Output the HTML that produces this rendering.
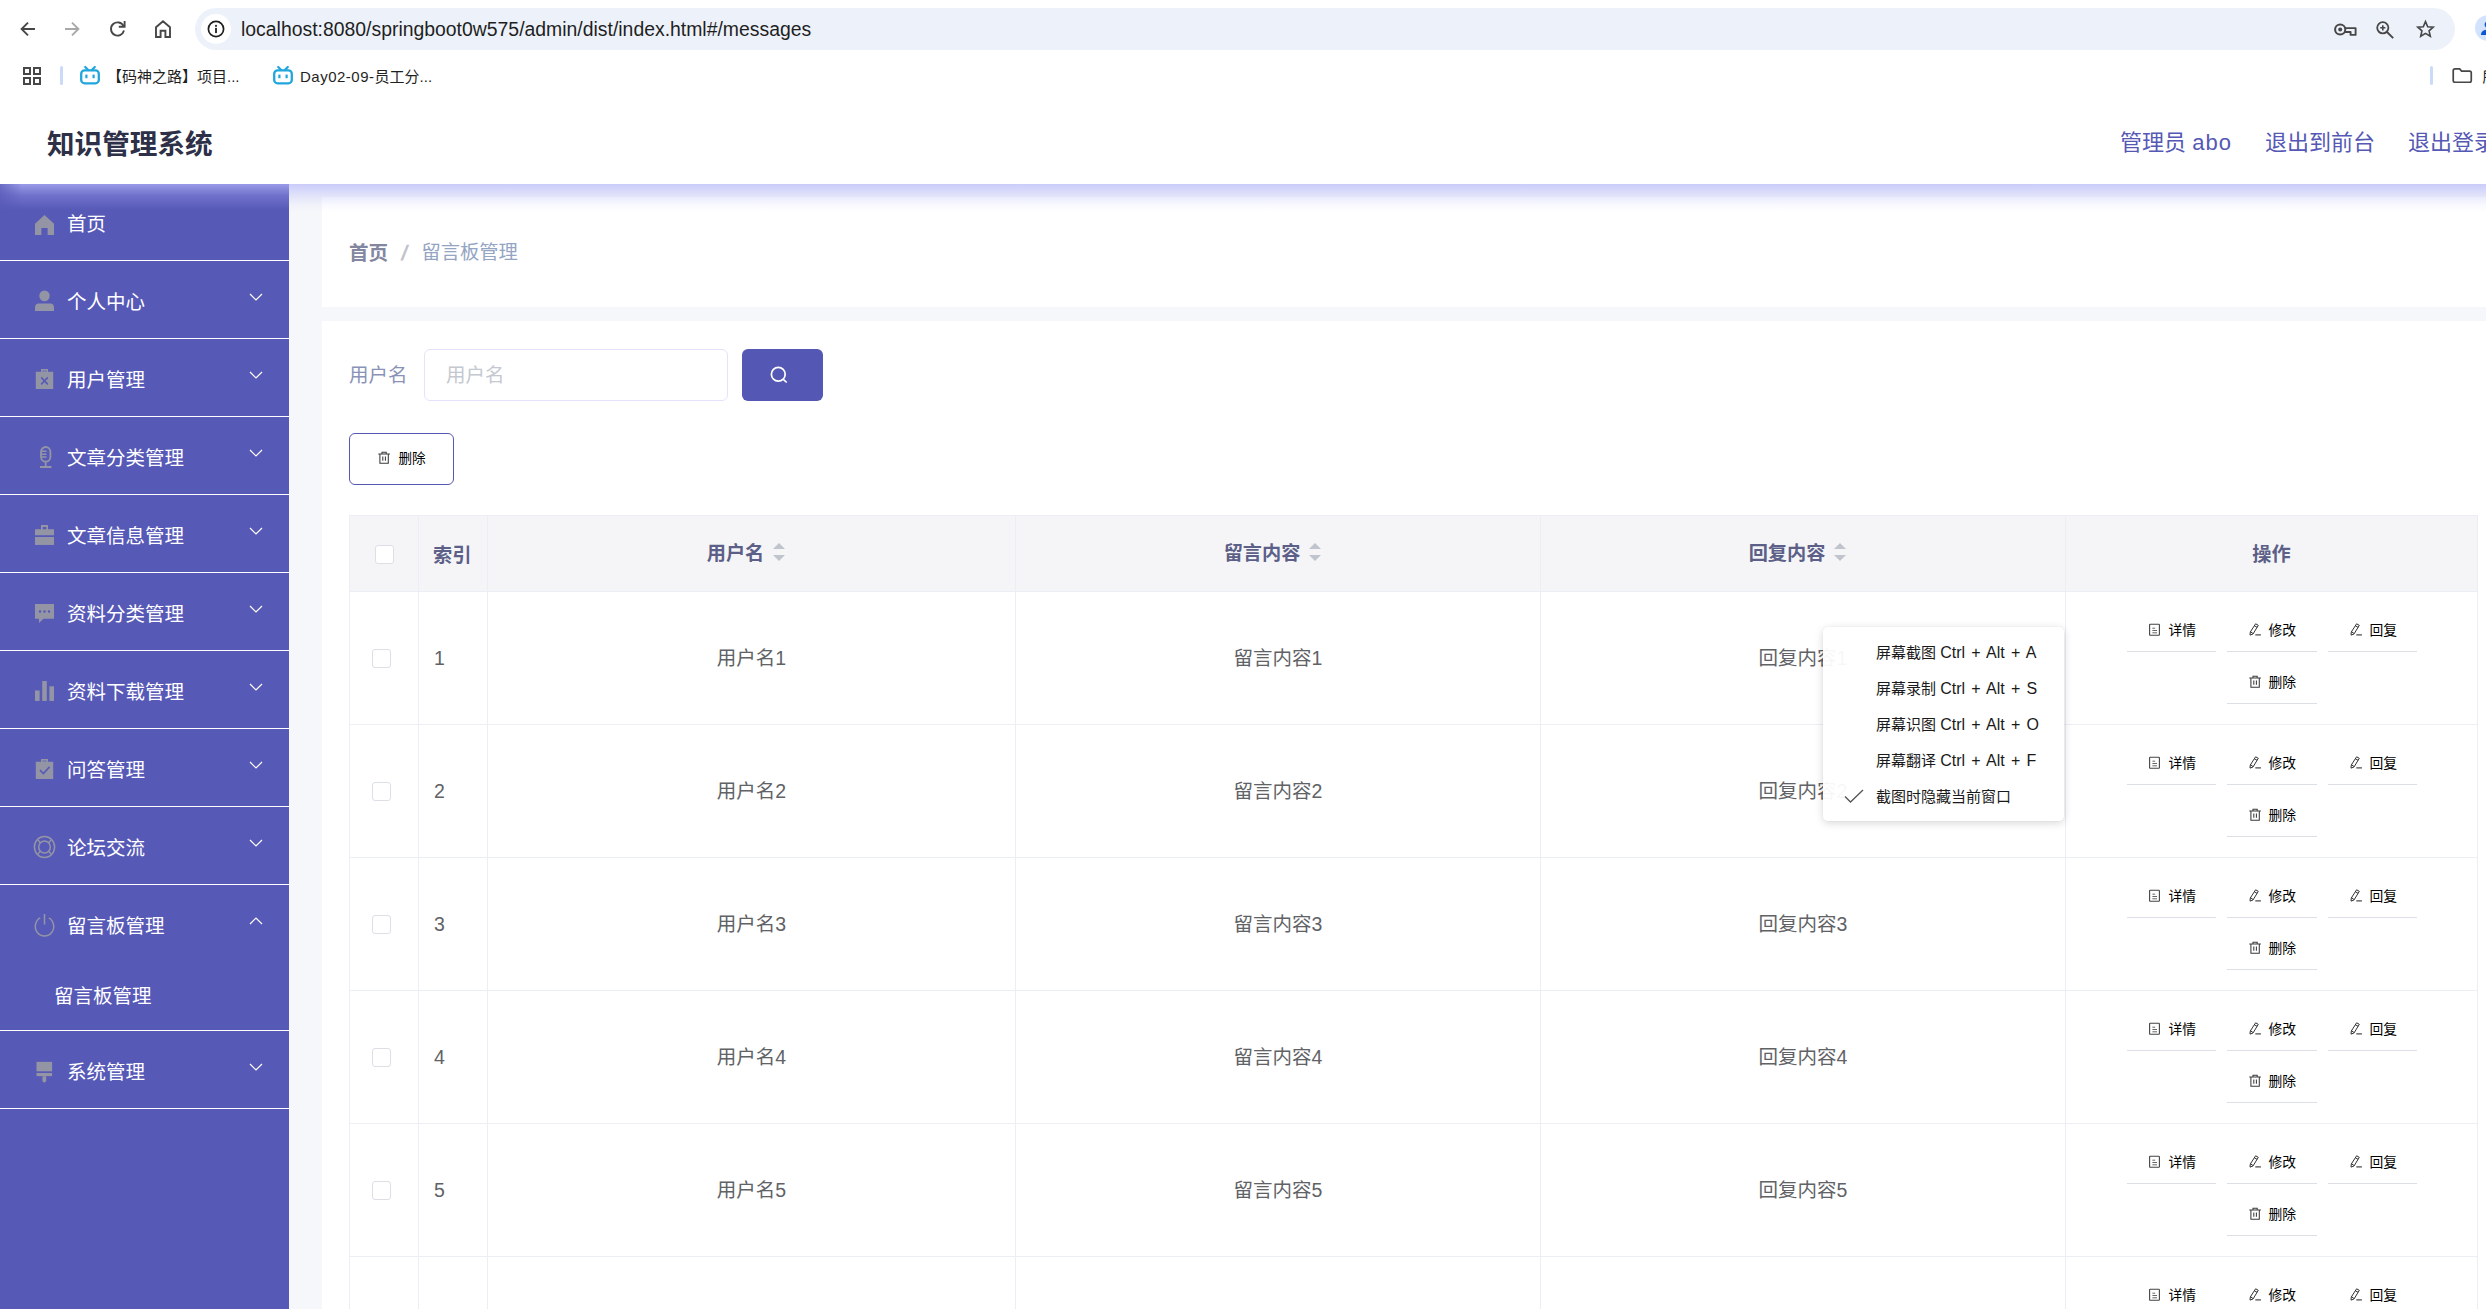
<!DOCTYPE html>
<html lang="zh-CN"><head><meta charset="utf-8"><title>知识管理系统</title>
<style>
*{box-sizing:border-box;margin:0;padding:0}
html,body{width:2486px;height:1309px;overflow:hidden;background:#fff}
body{position:relative;font-family:"Liberation Sans","Noto Sans CJK SC",sans-serif;color:#333}
.abs{position:absolute}
svg{display:block;overflow:visible}
/* ---------- browser chrome ---------- */
#chrome{position:absolute;left:0;top:0;width:2486px;height:100px;background:#fff}
#pill{position:absolute;left:195px;top:8px;width:2260px;height:42px;border-radius:21px;background:#edf2fa}
#infoc{position:absolute;left:6px;top:6px;width:30px;height:30px;border-radius:50%;background:#fff}
#url{position:absolute;left:46px;top:0;height:42px;line-height:42px;font-size:19.4px;color:#1f1f1f;white-space:nowrap;letter-spacing:0px}
.bm{position:absolute;top:65px;height:24px;line-height:24px;font-size:15px;color:#1f1f1f;white-space:nowrap}
/* ---------- app header ---------- */
#hdr{position:absolute;left:0;top:100px;width:2486px;height:84px;background:#fff;z-index:5}
#title{position:absolute;left:47px;top:0;height:84px;line-height:90px;font-size:27.6px;font-weight:700;color:#2d3047;white-space:nowrap}
.nav{position:absolute;top:0;height:84px;line-height:86px;font-size:22px;color:#5558b5;white-space:nowrap}
#glowS{position:absolute;left:0;top:184px;width:289px;height:26px;z-index:6;background:linear-gradient(to bottom,rgba(165,166,240,.85),rgba(140,141,225,.45) 45%,rgba(87,88,183,0) 100%)}
#glowC{position:absolute;left:0;top:184px;width:22px;height:26px;z-index:7;background:linear-gradient(to right,rgba(87,89,183,.7),rgba(87,89,183,0))}
#glowM{position:absolute;left:289px;top:184px;width:2197px;height:28px;z-index:6;background:linear-gradient(to bottom,rgba(190,192,250,.78),rgba(190,192,250,.43) 35%,rgba(190,192,250,.25) 54%,rgba(190,192,250,.07) 79%,rgba(190,192,250,0) 100%)}
/* ---------- sidebar ---------- */
#side{position:absolute;left:0;top:184px;width:289px;height:1125px;background:#5759b7}
.mi{position:relative;height:78px;border-bottom:1px solid #fff;color:#fff;font-size:19.5px}
.mi .tx{position:absolute;left:67px;top:0;height:77px;line-height:82px;white-space:nowrap}
.mi .ic{position:absolute;left:34px;top:28.5px;width:21px;height:22px}
.mi .ar{position:absolute;left:249px;top:31.500px;width:14px;height:8px}
.mi.first{height:77px}.mi.first .ic{top:29.5px}.mi.first .tx{top:-1px}
.sub{height:146px}
.sub .tx2{position:absolute;left:54px;top:76.500px;height:68px;line-height:68px;white-space:nowrap}
/* ---------- main ---------- */
#main{position:absolute;left:289px;top:184px;width:2197px;height:1125px;background:#f6f7fa}
#bc{position:absolute;left:33px;top:13px;width:2200px;height:110px;background:#fff}
#bc span{position:absolute;top:0;height:110px;line-height:112px;font-size:19.5px;white-space:nowrap}
#card{position:absolute;left:33px;top:137px;width:2200px;height:1000px;background:#fff}
#lbl{position:absolute;left:27px;top:28px;height:52px;line-height:53px;font-size:19.5px;color:#8a93b7;white-space:nowrap}
#inp{position:absolute;left:102px;top:28px;width:304px;height:52px;border:1px solid #e4e3fb;border-radius:6px;background:#fff}
#inp span{position:absolute;left:21px;top:0;height:50px;line-height:51px;font-size:19.5px;color:#c4c8d0;white-space:nowrap}
#sbtn{position:absolute;left:420px;top:28px;width:81px;height:52px;border-radius:6px;background:#5457b3}
#dbtn{position:absolute;left:27px;top:112px;width:105px;height:52px;border:1px solid #5457b3;border-radius:6px;background:#fff}
#dbtn span{position:absolute;left:48.5px;top:0;height:50px;line-height:50px;font-size:13.6px;color:#000;white-space:nowrap}
/* table */
#tbl{position:absolute;left:27px;top:194px;width:2129px;height:900px;border-left:1px solid #ebeef5;border-top:1px solid #ebeef5;border-right:1px solid #ebeef5}
.tr{position:relative;width:100%;height:133px;border-bottom:1px solid #ebeef5}
.th{height:76px;background:#f5f5f8}
.td{position:absolute;top:0;height:100%;border-right:1px solid #ebeef5}
.c0{left:0;width:69px}.c1{left:69px;width:69px}.c2{left:138px;width:528px}.c3{left:666px;width:525px}.c4{left:1191px;width:525px}.c5{left:1716px;width:411px;border-right:0}
.cb{position:absolute;width:19px;height:19px;border:1px solid #dcdfe6;border-radius:3px;background:#fff}
.ht{position:absolute;top:0;height:75px;line-height:78px;font-size:19.2px;font-weight:700;color:#5c5f87;white-space:nowrap}
.ct{position:absolute;top:0;height:132px;line-height:133px;font-size:19.5px;color:#606266;white-space:nowrap}
.cen{left:0;width:100%;text-align:center}
.srt{left:-4.5px;line-height:75.5px}
.sort{display:inline-block;position:relative;width:14px;height:20px;vertical-align:middle;margin-left:9px;top:-3px}
.sort i{position:absolute;left:0;width:0;height:0;border-left:6.5px solid transparent;border-right:6.5px solid transparent}
.sort .u{top:1px;border-bottom:6.5px solid #c0c4cc}
.sort .d{top:13.5px;border-top:6.5px solid #c0c4cc}
.ob{position:absolute;width:89px;height:43px;border-bottom:1px solid #dcdfe6;font-size:13.8px;color:#000;white-space:nowrap}
.ob svg{position:absolute;left:22px;top:14.200px}
.ob span{position:absolute;left:41.5px;top:0;height:44px;line-height:44px}
/* popup */
#pop{position:absolute;left:1823px;top:627px;width:241px;height:194px;border-radius:5px;background:rgba(255,255,255,.95);box-shadow:0 2px 8px rgba(0,0,0,.16),0 0 1px rgba(0,0,0,.12);z-index:20}
#pop div{position:absolute;left:53px;height:36px;line-height:36px;font-size:15px;color:#1a1a1a;white-space:nowrap}
#pop .lt{font-size:16px;word-spacing:1.8px}
</style></head>
<body>
<div id="chrome">
<svg width="16" height="16" viewBox="0 0 16 16" style="position:absolute;left:20px;top:21px"><path d="M15 8H2.2M8 1.6L1.6 8 8 14.4" fill="none" stroke="#474747" stroke-width="1.9"/></svg>
<svg width="16" height="16" viewBox="0 0 16 16" style="position:absolute;left:64px;top:21px"><path d="M1 8H13.8M8 1.6L14.4 8 8 14.4" fill="none" stroke="#a8a8a8" stroke-width="1.9"/></svg>
<svg width="17" height="17" viewBox="0 0 17 17" style="position:absolute;left:109px;top:20px"><path d="M14.6 6.2A6.6 6.6 0 1 0 15 10.6" fill="none" stroke="#474747" stroke-width="1.9"/><path d="M15.6 1v5.8H9.8" fill="none" stroke="#474747" stroke-width="1.9"/></svg>
<svg width="16" height="18" viewBox="0 0 16 18" style="position:absolute;left:155px;top:19.5px"><path d="M1 17V7.2L8 1.3l7 5.9V17h-4.6v-6.2H5.6V17z" fill="none" stroke="#474747" stroke-width="1.9" stroke-linejoin="miter"/></svg>
<div id="pill"><div id="infoc"><svg width="18" height="18" viewBox="0 0 18 18" style="position:absolute;left:6px;top:6px"><circle cx="9" cy="9" r="7.6" fill="none" stroke="#1f1f1f" stroke-width="1.7"/><rect x="8.1" y="7.9" width="1.8" height="5.2" fill="#1f1f1f"/><rect x="8.1" y="4.9" width="1.8" height="1.9" fill="#1f1f1f"/></svg></div>
<div id="url">localhost:8080/springboot0w575/admin/dist/index.html#/messages</div>
<svg width="23" height="12" viewBox="0 0 23 12" style="position:absolute;left:2138.5px;top:15.3px"><circle cx="6.2" cy="6.500" r="5.100" fill="none" stroke="#474747" stroke-width="2"/><circle cx="6.2" cy="6.4" r="2" fill="#474747"/><path d="M10.9 5.100H21.600V11.900H16.600V9H10.900" fill="none" stroke="#474747" stroke-width="1.9" stroke-linejoin="round"/></svg>
<svg width="18" height="18" viewBox="0 0 18 18" style="position:absolute;left:2181px;top:13px"><circle cx="6.8" cy="6.8" r="5.6" fill="none" stroke="#474747" stroke-width="1.8"/><path d="M11 11l6.2 6.2" stroke="#474747" stroke-width="1.9" fill="none"/><path d="M4.2 6.8h5.2M6.8 4.2v5.2" stroke="#474747" stroke-width="1.6" fill="none"/></svg>
<svg width="19" height="17.3" viewBox="0 0 19 18" style="position:absolute;left:2220.500px;top:11.800px"><path d="M9.5 1.7l2.3 5.3 5.7.5-4.3 3.8 1.3 5.6-5-3-5 3 1.3-5.6L1.5 7.5l5.7-.5z" fill="none" stroke="#474747" stroke-width="1.7" stroke-linejoin="miter"/></svg>
</div>
<div class="abs" style="left:2475px;top:15px;width:26px;height:26px;border-radius:50%;background:#d3e3fd"></div>
<svg width="16" height="16" viewBox="0 0 16 16" style="position:absolute;left:2479.500px;top:19.500px"><circle cx="8" cy="4.6" r="3.4" fill="#0b57d0"/><path d="M1 15c0-4 3.5-5.4 7-5.4s7 1.4 7 5.4z" fill="#0b57d0"/></svg>
<svg width="18" height="18" viewBox="0 0 18 18" style="position:absolute;left:23px;top:67px"><g fill="none" stroke="#474747" stroke-width="2"><rect x="1" y="1" width="6" height="6"/><rect x="11" y="1" width="6" height="6"/><rect x="1" y="11" width="6" height="6"/><rect x="11" y="11" width="6" height="6"/></g></svg>
<div class="abs" style="left:60px;top:66px;width:3px;height:19px;border-radius:1.5px;background:#c9dbf8"></div>
<svg width="20" height="19" viewBox="0 0 20 19" style="position:absolute;left:80px;top:66px"><path d="M5.2 1l3 3M14.8 1l-3 3" stroke="#20a6dd" stroke-width="2.2" fill="none" stroke-linecap="round"/><rect x="1.2" y="4.3" width="17.6" height="13" rx="3.4" fill="none" stroke="#20a6dd" stroke-width="2.3"/><rect x="5.3" y="8.6" width="2.2" height="3.6" fill="#20a6dd"/><rect x="12.5" y="8.6" width="2.2" height="3.6" fill="#20a6dd"/></svg>
<div class="bm" style="left:107px">【码神之路】项目...</div>
<svg width="20" height="19" viewBox="0 0 20 19" style="position:absolute;left:273px;top:66px"><path d="M5.2 1l3 3M14.8 1l-3 3" stroke="#20a6dd" stroke-width="2.2" fill="none" stroke-linecap="round"/><rect x="1.2" y="4.3" width="17.6" height="13" rx="3.4" fill="none" stroke="#20a6dd" stroke-width="2.3"/><rect x="5.3" y="8.6" width="2.2" height="3.6" fill="#20a6dd"/><rect x="12.5" y="8.6" width="2.2" height="3.6" fill="#20a6dd"/></svg>
<div class="bm" style="left:300px"><span style="letter-spacing:.5px">Day02-09-</span>员工分...</div>
<div class="abs" style="left:2430px;top:66px;width:3px;height:19px;border-radius:1.5px;background:#c9dbf8"></div>
<svg width="20.5" height="15.2" viewBox="0 0 21 16" style="position:absolute;left:2452px;top:68px"><path d="M1 2.8c0-1 .8-1.8 1.8-1.8h5l2 2.2h8.4c1 0 1.8.8 1.8 1.8v8.2c0 1-.8 1.8-1.8 1.8H2.800c-1 0-1.8-.8-1.8-1.8z" fill="none" stroke="#474747" stroke-width="1.8"/></svg>
<div class="bm" style="left:2482.500px">所有书签</div>
<div id="hdr"><div id="title">知识管理系统</div>
<div class="nav" style="left:2120px">管理员 <span style="letter-spacing:1.1px">abo</span></div>
<div class="nav" style="left:2265px">退出到前台</div>
<div class="nav" style="left:2408px">退出登录</div></div>
<div id="glowS"></div><div id="glowC"></div><div id="glowM"></div>
<div id="side">
<div class="mi first"><div class="ic"><svg width="21" height="22" viewBox="0 0 21 21" preserveAspectRatio="none"><path d="M10.5 1L1 9.3V20h6.4v-6.6h6.200V20H20V9.300z" fill="#9395a5"/></svg></div><div class="tx">首页</div></div>
<div class="mi"><div class="ic"><svg width="21" height="22" viewBox="0 0 21 21" preserveAspectRatio="none"><circle cx="10.5" cy="5.600" r="5.2" fill="#9395a5"/><path d="M1 20v-3.600c0-2.200 1.600-3.600 3.600-3.600h11.800c2 0 3.600 1.400 3.600 3.600V20z" fill="#9395a5"/></svg></div><div class="tx">个人中心</div><div class="ar"><svg width="14" height="8" viewBox="0 0 14 8" style=""><path d="M1 1l6 6 6-6" fill="none" stroke="#fff" stroke-width="1.200"/></svg></div></div>
<div class="mi"><div class="ic"><svg width="21" height="22" viewBox="0 0 21 21" preserveAspectRatio="none"><path d="M7 1h7v2.600h5.200V20H1.800V3.600H7z" fill="#9395a5"/><path d="M7.200 9l6.600 6.600M13.800 9l-6.600 6.600" stroke="#5759b7" stroke-width="1.500" fill="none"/><rect x="8.300" y="2.200" width="4.400" height="1.400" fill="#5759b7" opacity=".45"/></svg></div><div class="tx">用户管理</div><div class="ar"><svg width="14" height="8" viewBox="0 0 14 8" style=""><path d="M1 1l6 6 6-6" fill="none" stroke="#fff" stroke-width="1.200"/></svg></div></div>
<div class="mi"><div class="ic"><svg width="21" height="22" viewBox="0 0 21 21" preserveAspectRatio="none"><rect x="7" y="1" width="9.400" height="14" rx="4.700" fill="none" stroke="#9395a5" stroke-width="1.800"/><path d="M7.500 5h5M7.500 7.800h5M7.500 10.600h5" stroke="#9395a5" stroke-width="1.400" fill="none"/><path d="M11.700 15.500v4M6 20h11.400" stroke="#9395a5" stroke-width="1.800" fill="none"/></svg></div><div class="tx">文章分类管理</div><div class="ar"><svg width="14" height="8" viewBox="0 0 14 8" style=""><path d="M1 1l6 6 6-6" fill="none" stroke="#fff" stroke-width="1.200"/></svg></div></div>
<div class="mi"><div class="ic"><svg width="21" height="22" viewBox="0 0 21 21" preserveAspectRatio="none"><path d="M7 1h7v4h6v5.800H1V5h6zM8.800 2.800V5h3.400V2.800z" fill="#9395a5" fill-rule="evenodd"/><rect x="1" y="12.400" width="19" height="7.600" fill="#9395a5"/></svg></div><div class="tx">文章信息管理</div><div class="ar"><svg width="14" height="8" viewBox="0 0 14 8" style=""><path d="M1 1l6 6 6-6" fill="none" stroke="#fff" stroke-width="1.200"/></svg></div></div>
<div class="mi"><div class="ic"><svg width="21" height="22" viewBox="0 0 21 21" preserveAspectRatio="none"><path d="M1 2h19v14H9.500L5 20v-4H1z" fill="#9395a5"/><circle cx="6" cy="9" r="1.200" fill="#5759b7"/><circle cx="10.500" cy="9" r="1.200" fill="#5759b7"/><circle cx="15" cy="9" r="1.200" fill="#5759b7"/></svg></div><div class="tx">资料分类管理</div><div class="ar"><svg width="14" height="8" viewBox="0 0 14 8" style=""><path d="M1 1l6 6 6-6" fill="none" stroke="#fff" stroke-width="1.200"/></svg></div></div>
<div class="mi"><div class="ic"><svg width="21" height="22" viewBox="0 0 21 21" preserveAspectRatio="none"><rect x="1" y="10" width="4.600" height="10" fill="#9395a5"/><rect x="8.200" y="1" width="4.600" height="19" fill="#9395a5"/><rect x="15.400" y="6" width="4.600" height="14" fill="#9395a5"/></svg></div><div class="tx">资料下载管理</div><div class="ar"><svg width="14" height="8" viewBox="0 0 14 8" style=""><path d="M1 1l6 6 6-6" fill="none" stroke="#fff" stroke-width="1.200"/></svg></div></div>
<div class="mi"><div class="ic"><svg width="21" height="22" viewBox="0 0 21 21" preserveAspectRatio="none"><path d="M7 1h7v2.600h5.200V20H1.800V3.600H7z" fill="#9395a5"/><path d="M6 11.500l3.400 3.400L15.500 8.500" stroke="#5759b7" stroke-width="1.600" fill="none"/><rect x="8.300" y="2.200" width="4.400" height="1.400" fill="#5759b7" opacity=".45"/></svg></div><div class="tx">问答管理</div><div class="ar"><svg width="14" height="8" viewBox="0 0 14 8" style=""><path d="M1 1l6 6 6-6" fill="none" stroke="#fff" stroke-width="1.200"/></svg></div></div>
<div class="mi"><div class="ic"><svg width="21" height="22" viewBox="0 0 21 21" preserveAspectRatio="none"><circle cx="10.500" cy="10.500" r="10.100" fill="none" stroke="#9395a5" stroke-width="1.500"/><circle cx="10.500" cy="10.500" r="5.800" fill="none" stroke="#9395a5" stroke-width="1.500"/><path d="M3.800 3.800l2.800 2.800M17.200 3.800l-2.800 2.800M3.800 17.200l2.800-2.800M17.200 17.200l-2.800-2.800" stroke="#9395a5" stroke-width="1.400" fill="none"/></svg></div><div class="tx">论坛交流</div><div class="ar"><svg width="14" height="8" viewBox="0 0 14 8" style=""><path d="M1 1l6 6 6-6" fill="none" stroke="#fff" stroke-width="1.200"/></svg></div></div>
<div class="mi sub"><div class="ic"><svg width="21" height="22" viewBox="0 0 21 21" preserveAspectRatio="none"><path d="M6.200 3.700A9.200 9.200 0 1 0 14.800 3.700" fill="none" stroke="#9395a5" stroke-width="1.500"/><path d="M10.500 0v10" stroke="#9395a5" stroke-width="1.500" fill="none"/></svg></div><div class="tx">留言板管理</div><div class="ar"><svg width="14" height="8" viewBox="0 0 14 8" style=""><path d="M1 7L7 1l6 6" fill="none" stroke="#fff" stroke-width="1.200"/></svg></div><div class="tx2">留言板管理</div></div>
<div class="mi"><div class="ic"><svg width="21" height="22" viewBox="0 0 21 21" preserveAspectRatio="none"><rect x="2.500" y="1.800" width="15.600" height="9" fill="#9395a5"/><rect x="2.500" y="12.400" width="15.600" height="3" fill="#9395a5"/><path d="M8.400 15.400h3.800v5l-1.900 1.300-1.900-1.300z" fill="#9395a5"/></svg></div><div class="tx">系统管理</div><div class="ar"><svg width="14" height="8" viewBox="0 0 14 8" style=""><path d="M1 1l6 6 6-6" fill="none" stroke="#fff" stroke-width="1.200"/></svg></div></div>
</div>
<div id="main">
<div id="bc"><span style="left:27px;font-weight:700;color:#82869f">首页</span><span style="left:80px;color:#c0c4cc;font-weight:700;transform:skewX(-12deg);font-size:21px">/</span><span style="left:99.5px;color:#94a4c3;font-size:19.3px">留言板管理</span></div>
<div id="card">
<div id="lbl">用户名</div><div id="inp"><span>用户名</span></div>
<div id="sbtn"><svg width="18" height="18" viewBox="0 0 18 18" style="position:absolute;left:28.300px;top:17px"><circle cx="8.300" cy="8.300" r="6.900" fill="none" stroke="#fff" stroke-width="1.700"/><path d="M13.300 13.300l3.400 3.200" stroke="#fff" stroke-width="1.700" fill="none"/></svg></div>
<div id="dbtn"><svg width="13" height="13" viewBox="0 0 13 13" style="position:absolute;left:28px;top:16.500px"><path d="M.3 3h11.600M4 3V1.300h4.200V3M1.900 3v9.200h8.400V3M4.800 5.400v4.400M7.400 5.400v4.400" fill="none" stroke="#3a3a3a" stroke-width="1.050"/></svg><span>删除</span></div>
<div id="tbl">
<div class="tr th"><div class="td c0"><div class="cb" style="left:25px;top:29px"></div></div><div class="td c1"><div class="ht" style="left:14px;top:1px">索引</div></div><div class="td c2"><div class="ht cen srt">用户名<span class="sort"><i class="u"></i><i class="d"></i></span></div></div><div class="td c3"><div class="ht cen srt">留言内容<span class="sort"><i class="u"></i><i class="d"></i></span></div></div><div class="td c4"><div class="ht cen srt">回复内容<span class="sort"><i class="u"></i><i class="d"></i></span></div></div><div class="td c5"><div class="ht cen">操作</div></div></div>
<div class="tr"><div class="td c0"><div class="cb" style="left:22px;top:57px"></div></div><div class="td c1"><div class="ct" style="left:15px">1</div></div><div class="td c2"><div class="ct cen">用户名1</div></div><div class="td c3"><div class="ct cen">留言内容1</div></div><div class="td c4"><div class="ct cen">回复内容1</div></div><div class="td c5"><div class="ob" style="left:61px;top:17px;width:89px"><svg width="13" height="13" viewBox="0 0 13 13" style=""><rect x=".6" y="1.300" width="9.800" height="11" rx=".6" fill="none" stroke="#444" stroke-width="1.100"/><path d="M3.400 5.200h2.800M3.400 7.500h4.600M3.400 9.800h4.600" stroke="#555" stroke-width=".9" fill="none"/></svg><span>详情</span></div><div class="ob" style="left:161px;top:17px;width:90px"><svg width="13" height="13" viewBox="0 0 13 13" style=""><path d="M6.600 .8l2.700 1.500-5.300 8.700-3 1.100.300-3.100zM5.400 2.800l2.700 1.500M1.500 8.800l2.400 1.600" fill="none" stroke="#333" stroke-width="1" stroke-linejoin="round"/><path d="M6.300 11.900h5.600" stroke="#333" stroke-width="1.100"/></svg><span>修改</span></div><div class="ob" style="left:262px;top:17px;width:89px"><svg width="13" height="13" viewBox="0 0 13 13" style=""><path d="M6.600 .8l2.700 1.500-5.300 8.700-3 1.100.300-3.100zM5.400 2.800l2.700 1.500M1.500 8.800l2.400 1.600" fill="none" stroke="#333" stroke-width="1" stroke-linejoin="round"/><path d="M6.300 11.900h5.600" stroke="#333" stroke-width="1.100"/></svg><span>回复</span></div><div class="ob" style="left:161px;top:69px;width:90px"><svg width="13" height="13" viewBox="0 0 13 13" style=""><path d="M.3 3h11.600M4 3V1.300h4.200V3M1.900 3v9.200h8.400V3M4.800 5.400v4.400M7.400 5.400v4.400" fill="none" stroke="#3a3a3a" stroke-width="1.050"/></svg><span>删除</span></div></div></div>
<div class="tr"><div class="td c0"><div class="cb" style="left:22px;top:57px"></div></div><div class="td c1"><div class="ct" style="left:15px">2</div></div><div class="td c2"><div class="ct cen">用户名2</div></div><div class="td c3"><div class="ct cen">留言内容2</div></div><div class="td c4"><div class="ct cen">回复内容2</div></div><div class="td c5"><div class="ob" style="left:61px;top:17px;width:89px"><svg width="13" height="13" viewBox="0 0 13 13" style=""><rect x=".6" y="1.300" width="9.800" height="11" rx=".6" fill="none" stroke="#444" stroke-width="1.100"/><path d="M3.400 5.200h2.800M3.400 7.500h4.600M3.400 9.800h4.600" stroke="#555" stroke-width=".9" fill="none"/></svg><span>详情</span></div><div class="ob" style="left:161px;top:17px;width:90px"><svg width="13" height="13" viewBox="0 0 13 13" style=""><path d="M6.600 .8l2.700 1.500-5.300 8.700-3 1.100.300-3.100zM5.400 2.800l2.700 1.500M1.500 8.800l2.400 1.600" fill="none" stroke="#333" stroke-width="1" stroke-linejoin="round"/><path d="M6.300 11.900h5.600" stroke="#333" stroke-width="1.100"/></svg><span>修改</span></div><div class="ob" style="left:262px;top:17px;width:89px"><svg width="13" height="13" viewBox="0 0 13 13" style=""><path d="M6.600 .8l2.700 1.500-5.300 8.700-3 1.100.300-3.100zM5.400 2.800l2.700 1.500M1.500 8.800l2.400 1.600" fill="none" stroke="#333" stroke-width="1" stroke-linejoin="round"/><path d="M6.300 11.900h5.600" stroke="#333" stroke-width="1.100"/></svg><span>回复</span></div><div class="ob" style="left:161px;top:69px;width:90px"><svg width="13" height="13" viewBox="0 0 13 13" style=""><path d="M.3 3h11.600M4 3V1.300h4.200V3M1.900 3v9.200h8.400V3M4.800 5.400v4.400M7.400 5.400v4.400" fill="none" stroke="#3a3a3a" stroke-width="1.050"/></svg><span>删除</span></div></div></div>
<div class="tr"><div class="td c0"><div class="cb" style="left:22px;top:57px"></div></div><div class="td c1"><div class="ct" style="left:15px">3</div></div><div class="td c2"><div class="ct cen">用户名3</div></div><div class="td c3"><div class="ct cen">留言内容3</div></div><div class="td c4"><div class="ct cen">回复内容3</div></div><div class="td c5"><div class="ob" style="left:61px;top:17px;width:89px"><svg width="13" height="13" viewBox="0 0 13 13" style=""><rect x=".6" y="1.300" width="9.800" height="11" rx=".6" fill="none" stroke="#444" stroke-width="1.100"/><path d="M3.400 5.200h2.800M3.400 7.500h4.600M3.400 9.800h4.600" stroke="#555" stroke-width=".9" fill="none"/></svg><span>详情</span></div><div class="ob" style="left:161px;top:17px;width:90px"><svg width="13" height="13" viewBox="0 0 13 13" style=""><path d="M6.600 .8l2.700 1.500-5.300 8.700-3 1.100.300-3.100zM5.400 2.800l2.700 1.500M1.500 8.800l2.400 1.600" fill="none" stroke="#333" stroke-width="1" stroke-linejoin="round"/><path d="M6.300 11.900h5.600" stroke="#333" stroke-width="1.100"/></svg><span>修改</span></div><div class="ob" style="left:262px;top:17px;width:89px"><svg width="13" height="13" viewBox="0 0 13 13" style=""><path d="M6.600 .8l2.700 1.500-5.300 8.700-3 1.100.300-3.100zM5.400 2.800l2.700 1.500M1.500 8.800l2.400 1.600" fill="none" stroke="#333" stroke-width="1" stroke-linejoin="round"/><path d="M6.300 11.900h5.600" stroke="#333" stroke-width="1.100"/></svg><span>回复</span></div><div class="ob" style="left:161px;top:69px;width:90px"><svg width="13" height="13" viewBox="0 0 13 13" style=""><path d="M.3 3h11.600M4 3V1.300h4.200V3M1.900 3v9.200h8.400V3M4.800 5.400v4.400M7.400 5.400v4.400" fill="none" stroke="#3a3a3a" stroke-width="1.050"/></svg><span>删除</span></div></div></div>
<div class="tr"><div class="td c0"><div class="cb" style="left:22px;top:57px"></div></div><div class="td c1"><div class="ct" style="left:15px">4</div></div><div class="td c2"><div class="ct cen">用户名4</div></div><div class="td c3"><div class="ct cen">留言内容4</div></div><div class="td c4"><div class="ct cen">回复内容4</div></div><div class="td c5"><div class="ob" style="left:61px;top:17px;width:89px"><svg width="13" height="13" viewBox="0 0 13 13" style=""><rect x=".6" y="1.300" width="9.800" height="11" rx=".6" fill="none" stroke="#444" stroke-width="1.100"/><path d="M3.400 5.200h2.800M3.400 7.500h4.600M3.400 9.800h4.600" stroke="#555" stroke-width=".9" fill="none"/></svg><span>详情</span></div><div class="ob" style="left:161px;top:17px;width:90px"><svg width="13" height="13" viewBox="0 0 13 13" style=""><path d="M6.600 .8l2.700 1.500-5.300 8.700-3 1.100.300-3.100zM5.400 2.800l2.700 1.500M1.500 8.800l2.400 1.600" fill="none" stroke="#333" stroke-width="1" stroke-linejoin="round"/><path d="M6.300 11.900h5.600" stroke="#333" stroke-width="1.100"/></svg><span>修改</span></div><div class="ob" style="left:262px;top:17px;width:89px"><svg width="13" height="13" viewBox="0 0 13 13" style=""><path d="M6.600 .8l2.700 1.500-5.300 8.700-3 1.100.300-3.100zM5.400 2.800l2.700 1.500M1.500 8.800l2.400 1.600" fill="none" stroke="#333" stroke-width="1" stroke-linejoin="round"/><path d="M6.300 11.900h5.600" stroke="#333" stroke-width="1.100"/></svg><span>回复</span></div><div class="ob" style="left:161px;top:69px;width:90px"><svg width="13" height="13" viewBox="0 0 13 13" style=""><path d="M.3 3h11.600M4 3V1.300h4.200V3M1.900 3v9.200h8.400V3M4.800 5.400v4.400M7.400 5.400v4.400" fill="none" stroke="#3a3a3a" stroke-width="1.050"/></svg><span>删除</span></div></div></div>
<div class="tr"><div class="td c0"><div class="cb" style="left:22px;top:57px"></div></div><div class="td c1"><div class="ct" style="left:15px">5</div></div><div class="td c2"><div class="ct cen">用户名5</div></div><div class="td c3"><div class="ct cen">留言内容5</div></div><div class="td c4"><div class="ct cen">回复内容5</div></div><div class="td c5"><div class="ob" style="left:61px;top:17px;width:89px"><svg width="13" height="13" viewBox="0 0 13 13" style=""><rect x=".6" y="1.300" width="9.800" height="11" rx=".6" fill="none" stroke="#444" stroke-width="1.100"/><path d="M3.400 5.200h2.800M3.400 7.500h4.600M3.400 9.800h4.600" stroke="#555" stroke-width=".9" fill="none"/></svg><span>详情</span></div><div class="ob" style="left:161px;top:17px;width:90px"><svg width="13" height="13" viewBox="0 0 13 13" style=""><path d="M6.600 .8l2.700 1.500-5.300 8.700-3 1.100.300-3.100zM5.400 2.800l2.700 1.500M1.500 8.800l2.400 1.600" fill="none" stroke="#333" stroke-width="1" stroke-linejoin="round"/><path d="M6.300 11.900h5.600" stroke="#333" stroke-width="1.100"/></svg><span>修改</span></div><div class="ob" style="left:262px;top:17px;width:89px"><svg width="13" height="13" viewBox="0 0 13 13" style=""><path d="M6.600 .8l2.700 1.500-5.300 8.700-3 1.100.300-3.100zM5.400 2.800l2.700 1.500M1.500 8.800l2.400 1.600" fill="none" stroke="#333" stroke-width="1" stroke-linejoin="round"/><path d="M6.300 11.900h5.600" stroke="#333" stroke-width="1.100"/></svg><span>回复</span></div><div class="ob" style="left:161px;top:69px;width:90px"><svg width="13" height="13" viewBox="0 0 13 13" style=""><path d="M.3 3h11.600M4 3V1.300h4.200V3M1.900 3v9.200h8.400V3M4.800 5.400v4.400M7.400 5.400v4.400" fill="none" stroke="#3a3a3a" stroke-width="1.050"/></svg><span>删除</span></div></div></div>
<div class="tr"><div class="td c0"><div class="cb" style="left:22px;top:57px"></div></div><div class="td c1"><div class="ct" style="left:15px">6</div></div><div class="td c2"><div class="ct cen">用户名6</div></div><div class="td c3"><div class="ct cen">留言内容6</div></div><div class="td c4"><div class="ct cen">回复内容6</div></div><div class="td c5"><div class="ob" style="left:61px;top:17px;width:89px"><svg width="13" height="13" viewBox="0 0 13 13" style=""><rect x=".6" y="1.300" width="9.800" height="11" rx=".6" fill="none" stroke="#444" stroke-width="1.100"/><path d="M3.400 5.200h2.800M3.400 7.500h4.600M3.400 9.800h4.600" stroke="#555" stroke-width=".9" fill="none"/></svg><span>详情</span></div><div class="ob" style="left:161px;top:17px;width:90px"><svg width="13" height="13" viewBox="0 0 13 13" style=""><path d="M6.600 .8l2.700 1.500-5.300 8.700-3 1.100.300-3.100zM5.400 2.800l2.700 1.500M1.500 8.800l2.400 1.600" fill="none" stroke="#333" stroke-width="1" stroke-linejoin="round"/><path d="M6.300 11.900h5.600" stroke="#333" stroke-width="1.100"/></svg><span>修改</span></div><div class="ob" style="left:262px;top:17px;width:89px"><svg width="13" height="13" viewBox="0 0 13 13" style=""><path d="M6.600 .8l2.700 1.500-5.300 8.700-3 1.100.300-3.100zM5.400 2.800l2.700 1.500M1.500 8.800l2.400 1.600" fill="none" stroke="#333" stroke-width="1" stroke-linejoin="round"/><path d="M6.300 11.900h5.600" stroke="#333" stroke-width="1.100"/></svg><span>回复</span></div><div class="ob" style="left:161px;top:69px;width:90px"><svg width="13" height="13" viewBox="0 0 13 13" style=""><path d="M.3 3h11.600M4 3V1.300h4.200V3M1.900 3v9.200h8.400V3M4.800 5.400v4.400M7.400 5.400v4.400" fill="none" stroke="#3a3a3a" stroke-width="1.050"/></svg><span>删除</span></div></div></div>
</div></div></div>
<div id="pop">
<div style="top:8px">屏幕截图 <span class="lt">Ctrl + Alt + A</span></div>
<div style="top:44px">屏幕录制 <span class="lt">Ctrl + Alt + S</span></div>
<div style="top:80px">屏幕识图 <span class="lt">Ctrl + Alt + O</span></div>
<div style="top:116px">屏幕翻译 <span class="lt">Ctrl + Alt + F</span></div>
<div style="top:152px">截图时隐藏当前窗口</div>
<svg width="20" height="14" viewBox="0 0 20 14" style="position:absolute;left:21px;top:162px"><path d="M1 7.500l5.500 5.500L19 1" fill="none" stroke="#555" stroke-width="1.300"/></svg>
</div>
</body></html>
